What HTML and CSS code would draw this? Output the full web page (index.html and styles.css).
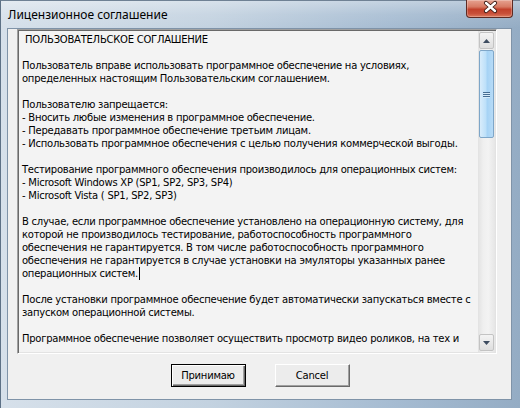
FILE: index.html
```html
<!DOCTYPE html>
<html lang="ru">

<head>
    <meta charset="UTF-8">
    <title>Лицензионное соглашение</title>
    <link rel="stylesheet" href="styles.css">
</head>

<body>
    <div class="window">

        <div class="titlebar">
            <span class="title">Лицензионное соглашение</span>
            <div class="close">
                <svg width="47" height="18" viewBox="0 0 47 18">
                    <path d="M19 4 L28 12 M28 4 L19 12" stroke="#3a1a14" stroke-width="4.2" stroke-linecap="round" />
                    <path d="M19 4 L28 12 M28 4 L19 12" stroke="#ffffff" stroke-width="2.4" stroke-linecap="round" />
                </svg>
            </div>
        </div>

        <div class="client">

            <div class="edit">
                <div class="text">
                    <p>&nbsp;ПОЛЬЗОВАТЕЛЬСКОЕ СОГЛАШЕНИЕ</p>
                    <p>Пользователь вправе использовать программное обеспечение на условиях,<br>
                        определенных настоящим Пользовательским соглашением.</p>
                    <p>Пользователю запрещается:<br>
                        - Вносить любые изменения в программное обеспечение.<br>
                        - Передавать программное обеспечение третьим лицам.<br>
                        - Использовать программное обеспечения с целью получения коммерческой выгоды.</p>
                    <p>Тестирование программного обеспечения производилось для операционных систем:<br>
                        - Microsoft Windows XP (SP1, SP2, SP3, SP4)<br>
                        - Microsoft Vista ( SP1, SP2, SP3)</p>
                    <p>В случае, если программное обеспечение установлено на операционную систему, для<br>
                        которой не производилось тестирование, работоспособность программного<br>
                        обеспечения не гарантируется. В том числе работоспособность программного<br>
                        обеспечения не гарантируется в случае установки на эмуляторы указанных ранее<br>
                        операционных систем.<span class="caret"></span></p>
                    <p>После установки программное обеспечение будет автоматически запускаться вместе с<br>
                        запуском операционной системы.</p>
                    <p>Программное обеспечение позволяет осуществить просмотр видео роликов, на тех и</p>
                </div>

                <div class="scroll">
                    <div class="arrow">
                        <svg width="7" height="4" viewBox="0 0 7 4"><path d="M0 4 L3.5 0 L7 4 Z" fill="#3d4c60" /></svg>
                    </div>
                    <div class="thumb">
                        <span class="grip"></span>
                        <span class="grip"></span>
                        <span class="grip"></span>
                    </div>
                    <div class="track"></div>
                    <div class="arrow">
                        <svg width="7" height="4" viewBox="0 0 7 4"><path d="M0 0 L7 0 L3.5 4 Z" fill="#3d4c60" /></svg>
                    </div>
                </div>
            </div>

            <div class="buttons">
                <button class="btn default">Принимаю</button>
                <button class="btn">Cancel</button>
            </div>

        </div>
    </div>
</body>

</html>
```

FILE: styles.css
```css
body {
    margin: 0;
    background: #8fa6bd;
}

.window {
    width: 520px;
    height: 408px;
    display: flex;
    flex-direction: column;
    box-sizing: border-box;
    border-left: 1px solid #5d7186;
    border-top: 1px solid #6f8194;
    background: linear-gradient(to right, #d6e0ea 0, #c3d2e0 40%, #a6bcd2 75%, #94acc4 100%);
}

/* title bar */
.titlebar {
    height: 27px;
    display: flex;
    align-items: center;
    padding-left: 7px;
    background: linear-gradient(to bottom, rgba(255, 255, 255, 0.35) 0, rgba(255, 255, 255, 0.1) 50%, rgba(255, 255, 255, 0) 100%);
}

.title {
    font-family: "Noto Sans", "Liberation Sans", sans-serif;
    font-size: 12px;
    color: #000;
    margin-top: -1px;
}

.close {
    margin-left: auto;
    margin-right: 7px;
    align-self: flex-start;
    width: 47px;
    height: 18px;
    margin-top: -1px;
    box-sizing: border-box;
    border: 1px solid #5e2a22;
    border-top: 0;
    border-radius: 0 0 4px 4px;
    background: linear-gradient(to bottom, #e6a290 0, #d77a63 40%, #c2412b 55%, #c8503a 80%, #dd7a5e 100%);
    box-shadow: inset 0 0 0 1px rgba(255, 255, 255, 0.25);
}

.close svg {
    display: block;
    margin-top: -1px;
}

/* client area */
.client {
    flex: 1;
    margin: 0 8px 8px 6px;
    border: 1px solid #7f93a8;
    background: #f0f0f0;
    display: flex;
    flex-direction: column;
}

.edit {
    width: 480px;
    height: 325px;
    margin-left: 9px;
    box-sizing: border-box;
    display: flex;
    border-top: 1px solid #a0a0a0;
    border-left: 1px solid #a0a0a0;
    border-right: 1px solid #fff;
    border-bottom: 1px solid #fff;
    box-shadow: inset 1px 1px 0 #696969, inset -1px -1px 0 #e3e3e3;
    background: #f3f3f3;
}

.text {
    flex: 1;
    padding: 3px 3px 0 4px;
    overflow: hidden;
    font-family: "DejaVu Sans", sans-serif;
    font-size: 10px;
    letter-spacing: -0.25px;
    line-height: 13px;
    color: #000;
    white-space: nowrap;
}

.text p {
    margin: 0 0 13px 0;
}

.caret {
    display: inline-block;
    width: 1px;
    height: 13px;
    background: #000;
    vertical-align: top;
    margin-left: 1px;
}

/* scroll bar */
.scroll {
    width: 17px;
    margin: 1px 1px 1px 0;
    display: flex;
    flex-direction: column;
    background: linear-gradient(to right, #e2e2e2 0, #efefef 30%, #f3f3f3 60%, #e6e6e6 100%);
}

.arrow {
    height: 17px;
    box-sizing: border-box;
    margin: 1px;
    border: 1px solid #c3c3c3;
    border-radius: 2px;
    background: linear-gradient(to bottom, #f4f4f4, #dedede);
    display: flex;
    align-items: center;
    justify-content: center;
}

.thumb {
    height: 88px;
    margin: 0 1px;
    box-sizing: border-box;
    border: 1px solid #7ea6c8;
    border-radius: 2px;
    background: linear-gradient(to right, #d8ecfb 0, #bde0f9 45%, #a6d3f5 55%, #b7dbf7 100%);
    display: flex;
    flex-direction: column;
    align-items: center;
    justify-content: center;
    gap: 1px;
}

.grip {
    width: 7px;
    height: 1px;
    background: #466e93;
    box-shadow: 0 1px 0 #d6ecfb;
}

.track {
    flex: 1;
}

/* buttons */
.buttons {
    display: flex;
    justify-content: center;
    gap: 29px;
    margin-top: 10px;
    padding-left: 1px;
}

.btn {
    width: 75px;
    height: 23px;
    padding: 0;
    font-family: "DejaVu Sans", sans-serif;
    font-size: 10px;
    letter-spacing: -0.25px;
    color: #000;
    background: #ececec;
    border-top: 1px solid #fff;
    border-left: 1px solid #fff;
    border-right: 1px solid #696969;
    border-bottom: 1px solid #696969;
    box-shadow: inset -1px -1px 0 #a0a0a0;
}

.btn.default {
    border: 1px solid #000;
    box-shadow: inset 1px 1px 0 #fff, inset -1px -1px 0 #696969, inset -2px -2px 0 #a0a0a0;
}
```
